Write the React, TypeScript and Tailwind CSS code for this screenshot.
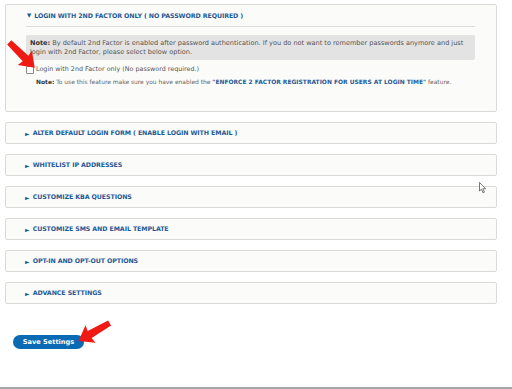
const SECTIONS = [
  "ALTER DEFAULT LOGIN FORM ( ENABLE LOGIN WITH EMAIL )",
  "WHITELIST IP ADDRESSES",
  "CUSTOMIZE KBA QUESTIONS",
  "CUSTOMIZE SMS AND EMAIL TEMPLATE",
  "OPT-IN AND OPT-OUT OPTIONS",
  "ADVANCE SETTINGS",
]

function RedArrow({ className, rotate }: { className: string; rotate: number }) {
  return (
    <svg
      className={className}
      height="26"
      viewBox="0 0 40 26"
      width="40"
      style={{ transform: `rotate(${rotate}deg)` }}
    >
      <path d="M2 13 L16 3 L15 9 L38 10 L38 16 L15 17 L16 23 Z" fill="#f01a14" />
    </svg>
  )
}

function Collapsed({ title }: { title: string }) {
  return (
    <div className="flex h-[22px] items-center rounded-[2px] border border-[#dadad8] bg-[#fbfbfa] pl-[19px]">
      <span className="mr-[3px] text-[6px] text-[#1f5a96]">►</span>
      <span className="text-[6.3px] font-bold tracking-[-0.1px] text-[#1f5a96]">{title}</span>
    </div>
  )
}

export default function App() {
  return (
    <div
      className="relative flex h-[389px] w-[512px] flex-col overflow-hidden bg-white"
      style={{ fontFamily: '"DejaVu Sans", Verdana, sans-serif' }}
    >
      <div className="flex flex-col gap-[10px] pl-[5px] pr-[15px] pt-[4px]">
        <div className="h-[108px] rounded-[2px] border border-[#dadad8] bg-[#fbfbfa] pl-[20px] pr-[21px]">
          <div className="flex h-[22px] items-center border-b border-[#dcdcdc] pl-[1px]">
            <span className="mr-[3px] text-[5.5px] text-[#1f5a96]">▼</span>
            <span className="text-[6.3px] font-bold tracking-[-0.1px] text-[#1f5a96]">
              LOGIN WITH 2ND FACTOR ONLY ( NO PASSWORD REQUIRED )
            </span>
          </div>
          <div className="mt-[8px] rounded-[2px] bg-[#e3e3e3] pb-[3px] pl-[4px] pr-[4px] pt-[4px] text-[6.55px] leading-[9px] text-[#555]">
            <b className="text-[#333]">Note:</b> By default 2nd Factor is enabled after password
            authentication. If you do not want to remember passwords anymore and just
            <br />
            login with 2nd Factor, please select below option.
          </div>
          <div className="mt-[5px] flex items-center gap-[2px]">
            <span className="h-[8px] w-[8px] rounded-[1px] border border-[#888] bg-white" />
            <span className="text-[6.4px] text-[#555]">
              Login with 2nd Factor only (No password required.)
            </span>
          </div>
          <div className="mt-[3px] pl-[10px] text-[5.95px] text-[#666]">
            <b className="text-[#333]">Note:</b> To use this feature make sure you have enabled the{" "}
            <b className="text-[#1f5a96]">"ENFORCE 2 FACTOR REGISTRATION FOR USERS AT LOGIN TIME"</b>{" "}
            feature.
          </div>
        </div>
        {SECTIONS.map((s) => (
          <Collapsed key={s} title={s} />
        ))}
      </div>

      <div className="mt-[31px] flex pl-[13px]">
        <button className="h-[14px] w-[71px] rounded-full bg-[#0b6ab4] text-[6.6px] font-bold leading-[14px] text-white">
          Save Settings
        </button>
      </div>

      <div className="mt-auto h-[2px] bg-[#a8a8a8]" />

      <RedArrow className="absolute left-[2px] top-[42px]" rotate={225} />
      <RedArrow className="absolute left-[74px] top-[319px]" rotate={-30} />

      <svg className="absolute left-[479px] top-[182px]" height="12" viewBox="0 0 8 12" width="8">
        <path d="M0.5 0.5 L0.5 9 L2.5 7.2 L4 10.8 L5.4 10.2 L3.9 6.7 L6.6 6.7 Z" fill="#fff" stroke="#555" strokeWidth="0.8" />
      </svg>
    </div>
  )
}
